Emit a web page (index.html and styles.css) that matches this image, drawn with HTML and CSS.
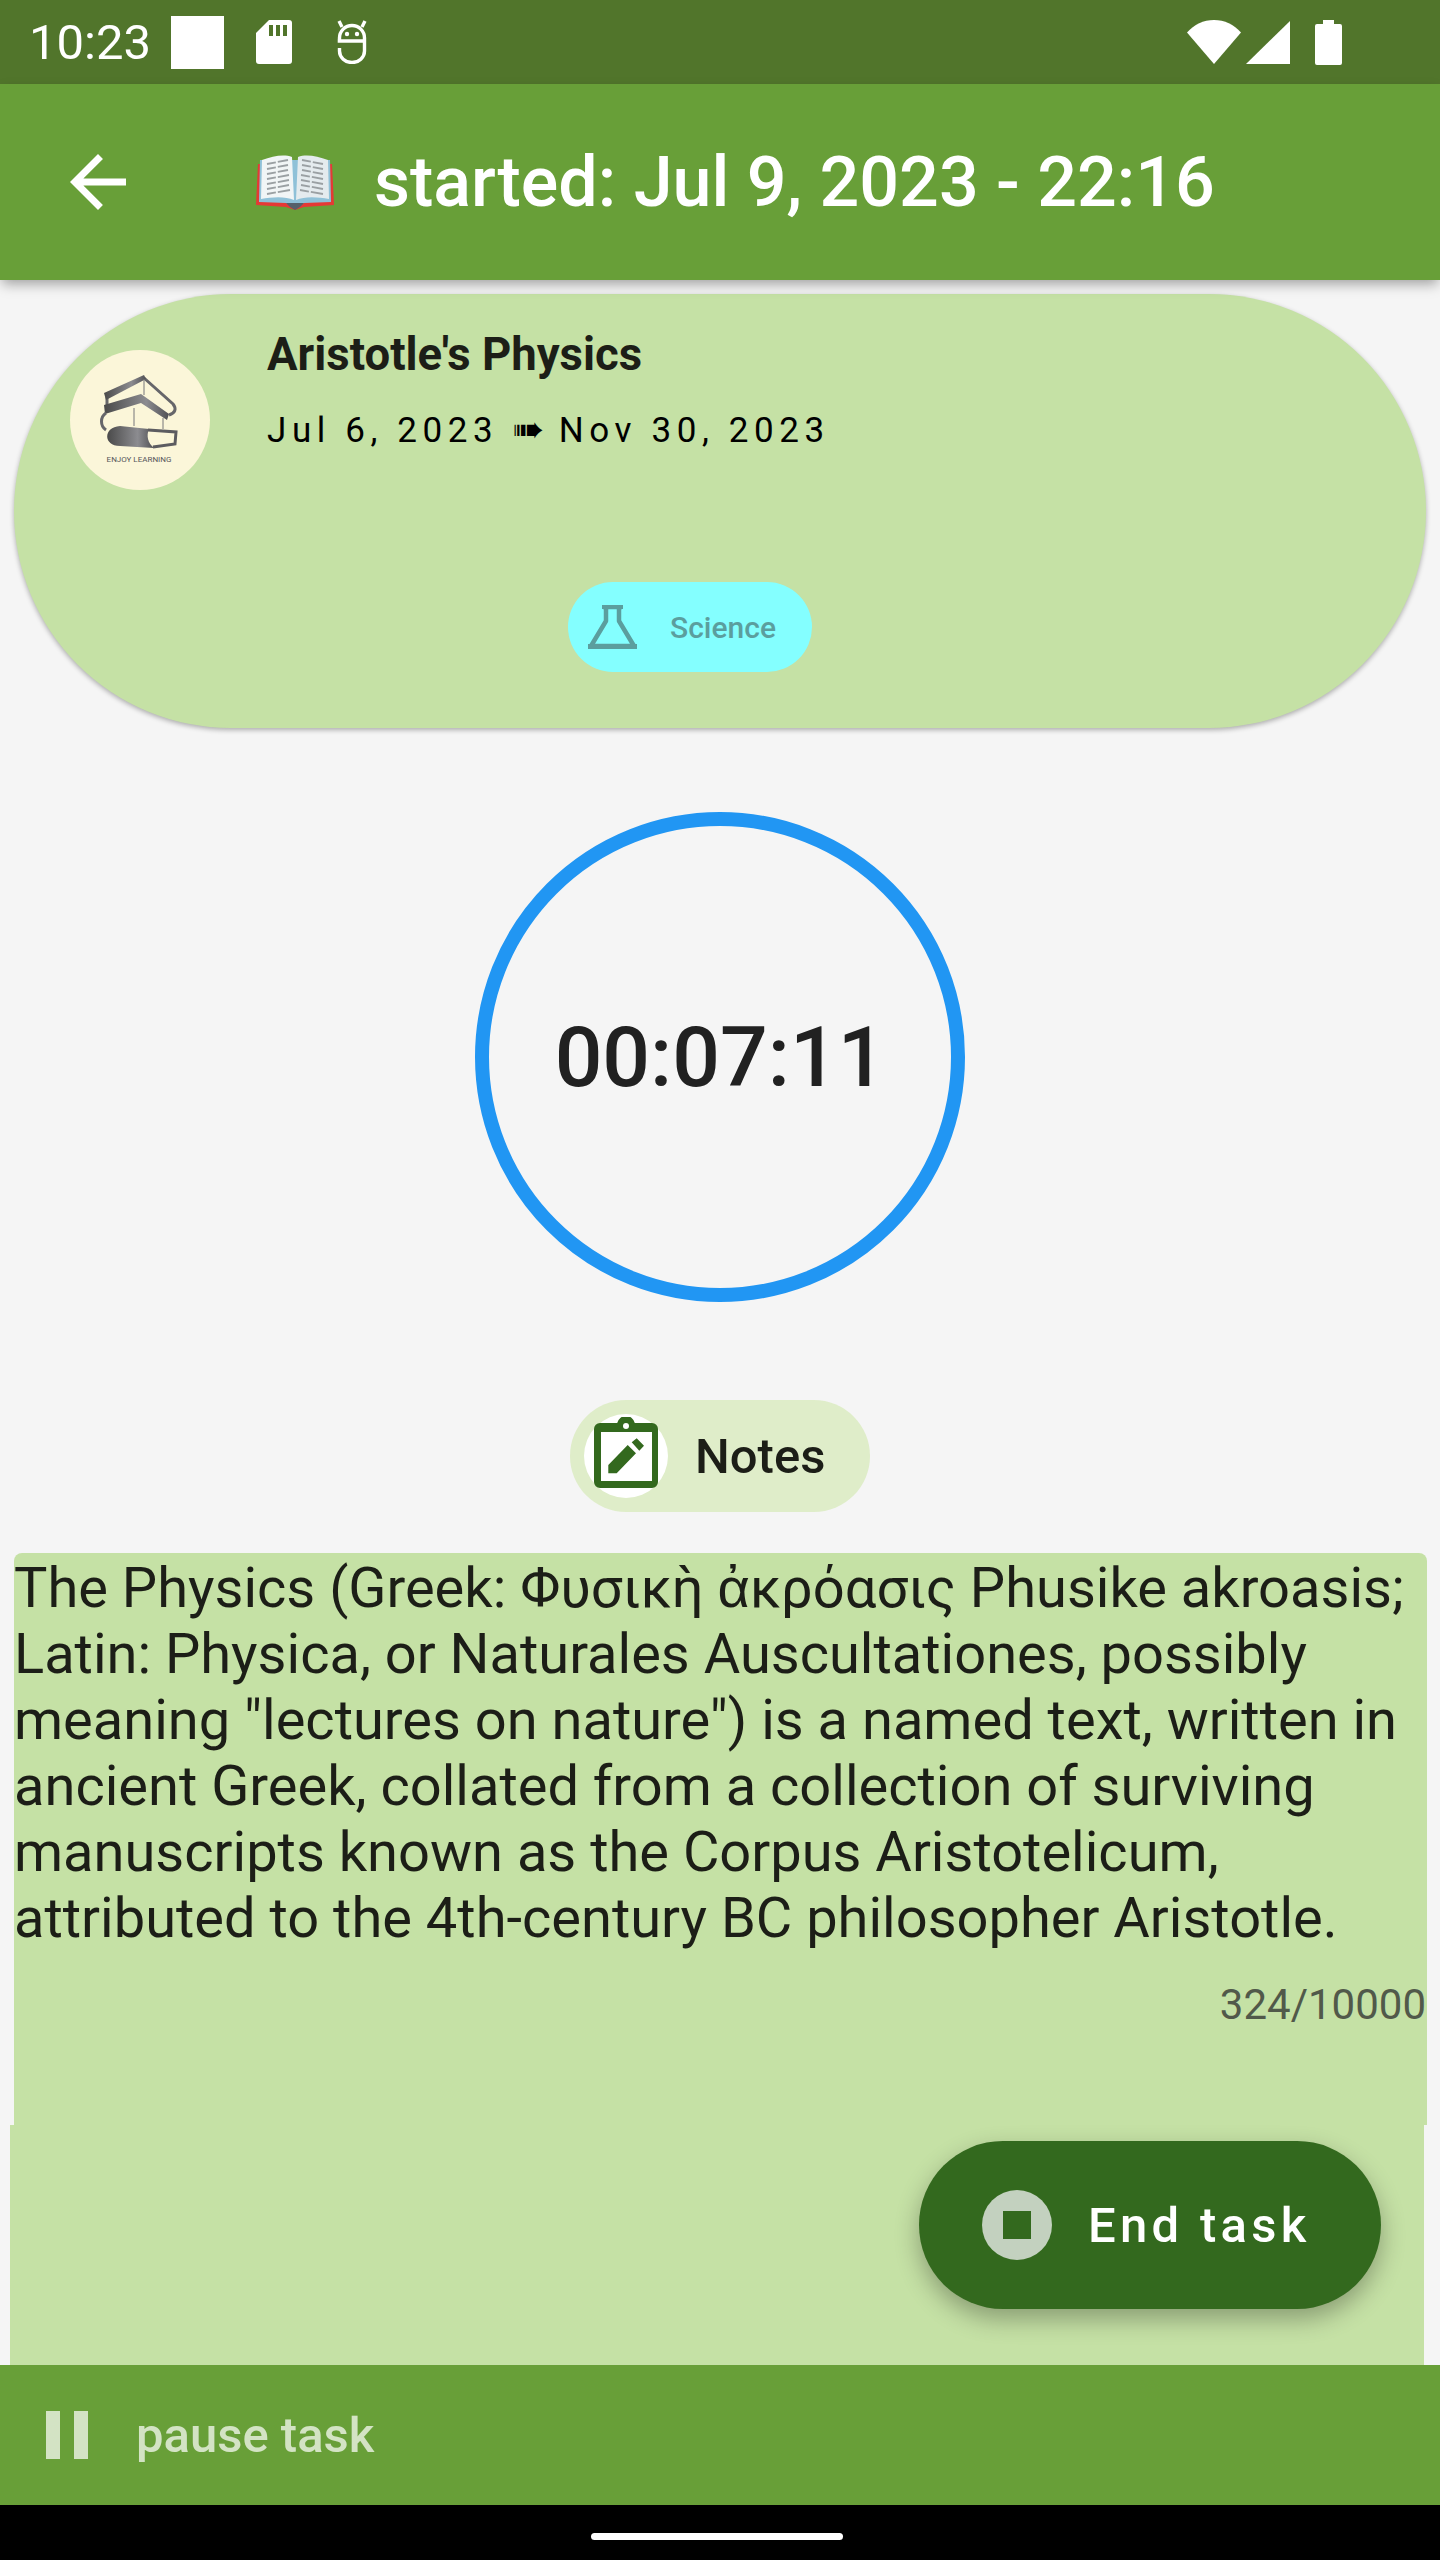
FILE: index.html
```html
<!DOCTYPE html>
<html lang="en">
<head>
  <meta charset="UTF-8">
  <meta name="viewport" content="width=device-width, initial-scale=1.0">
  <title>Task timer</title>
  <link rel="stylesheet" href="styles.css">
</head>
<body>
  <div class="screen">
    <div class="status-bar">
      <span class="clock">10:23</span>
      <span class="white-box"></span>
      <svg class="sd-icon" viewBox="0 0 36 44"><path fill="#fff" d="M13 0h20a3 3 0 0 1 3 3v38a3 3 0 0 1-3 3H3a3 3 0 0 1-3-3V13z"/><path fill="#51752b" d="M13 5h4v11h-4zM20 5h4v11h-4zM27 5h4v11h-4z"/></svg>
      <svg class="debug-icon" viewBox="0 0 32 44"><g fill="none" stroke="#fff" stroke-width="3.4"><path d="M3.500 21V18a12.500 12.500 0 0 1 25 0v3zM1.700 21H30M28.500 21v10a12.500 11.500 0 0 1-25 0v-3"/><path d="M3 1l3 6M29 1l-3 6"/></g><circle cx="11" cy="14" r="2.200" fill="#fff"/><circle cx="21" cy="14" r="2.200" fill="#fff"/></svg>
      <span class="status-right">
        <svg class="wifi-icon" viewBox="0 0 54 44"><path fill="#fff" d="M0 12.500C7 4.500 16.500 0 27 0s20 4.500 27 12.500L27 44z"/></svg>
        <svg class="signal-icon" viewBox="0 0 44 43"><path fill="#fff" d="M44 0v43H0z"/></svg>
        <svg class="battery-icon" viewBox="0 0 27 45"><path fill="#fff" d="M8 0h11v4h6a2 2 0 0 1 2 2v37a2 2 0 0 1-2 2H2a2 2 0 0 1-2-2V6a2 2 0 0 1 2-2h6z"/></svg>
      </span>
    </div>

    <header class="app-bar">
      <svg class="back-icon" viewBox="0 0 24 24"><path fill="#fff" d="M20 11H7.830l5.590-5.590L12 4l-8 8 8 8 1.410-1.410L7.830 13H20v-2z"/></svg>
      <svg class="book-icon" viewBox="0 0 78 56">
        <path fill="#e53935" d="M2 10h74l2 41-30 2-9 3-9-3-30-2z"/>
        <path fill="#8fc1d8" d="M4 6h70l1 42-27 1-9 4-9-4-27-1z"/>
        <path fill="#56606a" d="M30 49h18l-4 4-5 3-5-3z"/>
        <path fill="#f1f5f6" d="M6 6C17 2 28 0 36 3l2 43c-9-4-22-3-33-1z"/>
        <path fill="#e4ebee" d="M72 6C61 2 50 0 42 3l-2 43c9-4 22-3 33-1z"/>
        <g stroke="#9aa0a3" stroke-width="1.800" stroke-dasharray="9 2 14 2" fill="none">
          <path d="M11 10l21-4M11 15l21-4M11 20l21-4M11 25l22-4M11 30l22-4M11 35l22-4M11 40l23-4"/>
          <path d="M46 6l21 4M46 11l21 4M46 16l21 4M45 21l22 4M45 26l22 4M45 31l22 4M44 36l23 4"/>
        </g>
      </svg>
      <h1 class="app-title">started: Jul 9, 2023 - 22:16</h1>
    </header>

    <main class="content">
      <section class="task-card">
        <div class="task-top">
          <div class="task-avatar">
            <svg viewBox="0 0 140 140" width="140" height="140">
              <defs>
                <linearGradient id="bookGrey" x1="0" x2="1" y1="0" y2="0">
                  <stop offset="0" stop-color="#4a4a4a"/>
                  <stop offset="0.65" stop-color="#8c8c90"/>
                  <stop offset="1" stop-color="#505054"/>
                </linearGradient>
              </defs>
              <path fill="none" stroke="#66666a" stroke-width="3" d="M74 28L103 54C107 59 105 63 99 65M37 47V57"/>
              <path fill="url(#bookGrey)" d="M34 43L74 25l2 4L36 50z"/>
              <path fill="none" stroke="#77777b" d="M74 29V45M64 58V76M93 68V79"/>
              <path fill="url(#bookGrey)" d="M34 55L71 44L99 64L97 70L71 53L35 64z"/>
              <path fill="none" stroke="#66666a" stroke-width="3" d="M36 63C30 67 30 76 36 80"/>
              <path fill="url(#bookGrey)" d="M50 76L79 79C76 86 78 93 84 98L50 96C33 96 33 77 50 76z"/>
              <path fill="none" stroke="#5c5c60" stroke-width="3" d="M78 80L106 82L105 94L83 97"/>
              <text class="avatar-text" x="69" y="112" text-anchor="middle">ENJOY LEARNING</text>
            </svg>
          </div>
          <div class="task-info">
            <h2 class="task-name">Aristotle's Physics</h2>
            <p class="task-dates">Jul 6, 2023 <span class="date-arrow">➠</span> Nov 30, 2023</p>
          </div>
        </div>
        <div class="category-chip">
          <svg class="flask-icon" viewBox="0 0 49 44"><path fill="none" stroke="#5b9e9e" stroke-width="4.500" stroke-linejoin="round" d="M15 2h19M18 2v14L3 41h43L31 16V2"/><path fill="#5b9e9e" d="M14 0h21v4H14zM0 39h49v5H0z"/></svg>
          <span>Science</span>
        </div>
      </section>

      <div class="timer-wrap">
        <div class="timer-ring">00:07:11</div>
      </div>

      <div class="notes-row">
        <div class="notes-chip">
          <span class="notes-avatar">
            <svg viewBox="0 0 64 71" width="64" height="71">
              <path fill="#33691e" d="M6 6h17.200a9 9 0 0 1 17.600 0H58a6 6 0 0 1 6 6v53a6 6 0 0 1-6 6H6a6 6 0 0 1-6-6V12a6 6 0 0 1 6-6z"/>
              <circle cx="32" cy="9" r="3" fill="#fff"/>
              <path fill="#fff" d="M7 15h51v49H7z"/>
              <path fill="#33691e" d="M14.300 48L33.700 28L42 36.300L22.700 56.300H14.300zM37.700 25.300L42.700 21.300L50 28.700L45.300 33.700z"/>
            </svg>
          </span>
          <span class="notes-label">Notes</span>
        </div>
      </div>

      <div class="note-field">
        <p class="note-text">The Physics (Greek: Φυσικὴ ἀκρόασις Phusike akroasis; Latin: Physica, or Naturales Auscultationes, possibly meaning "lectures on nature") is a named text, written in ancient Greek, collated from a collection of surviving manuscripts known as the Corpus Aristotelicum, attributed to the 4th-century BC philosopher Aristotle.</p>
        <div class="note-count">324/10000</div>
      </div>
      <div class="note-rest"></div>

      <button class="end-task">
        <span class="stop-icon"><span></span></span>
        End task
      </button>
    </main>

    <footer class="pause-bar">
      <span class="pause-icon"><span></span><span></span></span>
      <span class="pause-label">pause task</span>
    </footer>

    <div class="nav-bar"><span class="nav-pill"></span></div>
  </div>
</body>
</html>
```
FILE: styles.css
```css
* {
  box-sizing: border-box;
}
body {
  margin: 0;
  font-family: Roboto, 'Liberation Sans', sans-serif;
  background-color: #f5f5f5;
}
h1, h2, p {
  margin: 0;
}
.screen {
  width: 1440px;
  height: 2560px;
  display: flex;
  flex-direction: column;
  overflow: hidden;
}

/* status bar */
.status-bar {
  height: 84px;
  flex: none;
  display: flex;
  align-items: center;
  padding-left: 29px;
  background-color: #51752b;
  color: #fff;
}
.clock {
  font-size: 49px;
  width: 142px;
}
.white-box {
  width: 53px;
  height: 53px;
  background-color: #fff;
}
.sd-icon {
  width: 36px;
  height: 44px;
  margin-left: 32px;
}
.debug-icon {
  width: 32px;
  height: 44px;
  margin-left: 44px;
}
.status-right {
  margin-left: auto;
  margin-right: 98px;
  display: flex;
  align-items: center;
}
.wifi-icon {
  width: 54px;
  height: 44px;
}
.signal-icon {
  width: 44px;
  height: 43px;
  margin-left: 5px;
}
.battery-icon {
  width: 27px;
  height: 45px;
  margin-left: 25px;
}

/* app bar */
.app-bar {
  height: 196px;
  flex: none;
  display: flex;
  align-items: center;
  padding-left: 56px;
  background-color: #689f38;
  box-shadow: 0 6px 12px -2px rgba(0, 0, 0, 0.35);
  position: relative;
  z-index: 2;
}
.back-icon {
  width: 84px;
  height: 84px;
}
.book-icon {
  width: 78px;
  height: 56px;
  margin-left: 116px;
}
.app-title {
  margin-left: 40px;
  font-size: 70px;
  font-weight: 500;
  color: #fff;
}

/* task card */
.content {
  flex: 1;
  display: flex;
  flex-direction: column;
  position: relative;
  padding-top: 14px;
}
.task-card {
  height: 434px;
  margin: 0 14px;
  border-radius: 217px;
  background-color: #c5e1a5;
  box-shadow: 0 2px 5px rgba(0, 0, 0, 0.3);
  padding: 30px 0 0 56px;
}
.task-top {
  display: flex;
  height: 258px;
}
.task-avatar {
  width: 140px;
  height: 140px;
  margin-top: 26px;
  border-radius: 50%;
  background-color: #fbf6d9;
  flex: none;
}
.avatar-text {
  font-size: 8px;
  fill: #55555a;
}
.task-info {
  margin-left: 57px;
  margin-top: 6px;
}
.task-name {
  font-size: 45.500px;
  font-weight: 700;
  color: #1c1e17;
  line-height: 49px;
}
.task-dates {
  margin-top: 32px;
  font-size: 35px;
  letter-spacing: 5.600px;
  color: #000;
  line-height: 40px;
}
.date-arrow {
  font-family: 'DejaVu Sans', sans-serif;
  letter-spacing: 0;
  font-size: 38px;
  line-height: 30px;
}
.category-chip {
  width: 244px;
  height: 90px;
  margin-left: 498px;
  border-radius: 45px;
  background-color: #84ffff;
  display: flex;
  align-items: center;
  padding-left: 20px;
  gap: 33px;
  color: #5b9e9e;
  font-size: 30px;
  font-weight: 500;
}
.flask-icon {
  width: 49px;
  height: 44px;
}

/* timer */
.timer-wrap {
  display: flex;
  justify-content: center;
  margin-top: 84px;
}
.timer-ring {
  width: 490px;
  height: 490px;
  border: 14px solid #2196f3;
  border-radius: 50%;
  display: flex;
  align-items: center;
  justify-content: center;
  font-size: 84px;
  font-weight: 500;
  color: #212121;
}

/* notes */
.notes-row {
  display: flex;
  justify-content: center;
  margin-top: 98px;
}
.notes-chip {
  width: 300px;
  height: 112px;
  border-radius: 56px;
  background-color: #dfedc9;
  display: flex;
  align-items: center;
  padding-left: 14px;
}
.notes-avatar {
  width: 84px;
  height: 84px;
  border-radius: 50%;
  background-color: #fff;
  display: flex;
  justify-content: center;
  padding-top: 3px;
}
.notes-label {
  margin-left: 27px;
  font-size: 49px;
  font-weight: 500;
  color: #1c1e17;
}
.note-field {
  height: 572px;
  margin: 41px 13px 0 14px;
  border-radius: 8px 8px 0 0;
  background-color: #c5e1a5;
  padding: 2px 1px 0 0;
}
.note-text {
  font-size: 56px;
  line-height: 66px;
  color: #1c1e17;
}
.note-count {
  margin-top: 29px;
  text-align: right;
  font-size: 42px;
  color: #51594a;
}
.note-rest {
  flex: 1;
  margin: 0 16px 0 10px;
  background-color: #c5e1a5;
}
.end-task {
  position: absolute;
  right: 59px;
  bottom: 56px;
  width: 462px;
  height: 168px;
  border: none;
  border-radius: 84px;
  background-color: #33691e;
  box-shadow: 0 10px 24px rgba(0, 0, 0, 0.3);
  display: flex;
  align-items: center;
  padding: 0 0 0 63px;
  gap: 36px;
  font-family: inherit;
  font-size: 49px;
  font-weight: 500;
  letter-spacing: 4.300px;
  color: #fff;
}
.stop-icon {
  width: 70px;
  height: 70px;
  border-radius: 50%;
  background-color: #c3d1bf;
  display: flex;
  align-items: center;
  justify-content: center;
}
.stop-icon span {
  width: 28px;
  height: 28px;
  background-color: #33691e;
}

/* bottom */
.pause-bar {
  height: 140px;
  flex: none;
  display: flex;
  align-items: center;
  padding-left: 46px;
  background-color: #689f38;
  color: #d3e3c4;
  position: relative;
}
.pause-icon {
  display: flex;
  gap: 14px;
}
.pause-icon span {
  width: 14px;
  height: 48px;
  background-color: #d3e3c4;
}
.pause-label {
  margin-left: 48px;
  font-size: 49px;
  font-weight: 500;
}
.nav-bar {
  height: 55px;
  flex: none;
  background-color: #000;
  display: flex;
  justify-content: center;
  padding: 28px 6px 0 0;
}
.nav-pill {
  width: 252px;
  height: 7px;
  border-radius: 4px;
  background-color: #fff;
}
```
